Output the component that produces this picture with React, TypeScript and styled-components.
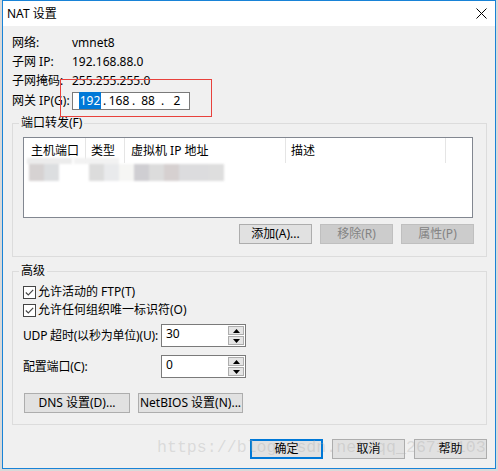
import React from 'react'
import styled, { createGlobalStyle } from 'styled-components'

const GlobalStyle = createGlobalStyle`
  html, body {
    margin: 0;
    padding: 0;
    background: #d9d9d9;
  }
  body {
    font-family: "Noto Sans", "Noto Sans CJK SC", sans-serif;
    font-size: 12px;
    color: #000;
  }
  * { box-sizing: border-box; }
`

const Window = styled.div`
  position: relative;
  width: 494px;
  height: 469px;
  margin-left: 2px;
  border: 1px solid #1883d7;
  background: #f0f0f0;
  display: flex;
  flex-direction: column;
  overflow: hidden;
`

const TitleBar = styled.div`
  height: 25px;
  background: #fff;
  display: flex;
  align-items: center;
  justify-content: space-between;
  padding-left: 4px;
  padding-right: 8px;
  font-size: 12px;
  line-height: 16px;
`

const Body = styled.div`
  flex: 1;
  display: flex;
  flex-direction: column;
  padding: 7px 7px 0 9px;
`

const Info = styled.div`
  position: relative;
  display: flex;
  flex-direction: column;
`

const InfoRow = styled.div<{ $h?: number }>`
  display: flex;
  align-items: center;
  height: ${p => p.$h ?? 19}px;
  line-height: 16px;
`

const InfoLabel = styled.div`
  width: 60px;
  white-space: nowrap;
`

const IpBox = styled.div`
  width: 118px;
  height: 18px;
  border: 1px solid #7a7a7a;
  background: #fff;
  display: flex;
  align-items: center;
  padding-left: 5px;
`

const Octet = styled.div`
  width: 24px;
  text-align: center;
  line-height: 14px;
`

const Selected = styled.span`
  background: #0078d7;
  color: #fff;
  padding: 0 1px;
`

const Dot = styled.div`
  width: 5px;
  text-align: center;
`

const RedMark = styled.div`
  position: absolute;
  left: 48px;
  top: 46px;
  width: 152px;
  height: 38px;
  border: 1px solid #e8413c;
  pointer-events: none;
`

const Group = styled.fieldset<{ $mt: number }>`
  margin: ${p => p.$mt}px 0 0 0;
  padding: 0;
  min-width: 0;
  width: 475px;
  border: 1px solid #dcdcdc;
`

const Legend = styled.legend`
  margin-left: 6px;
  padding: 0 2px;
  line-height: 16px;
`

const GroupInner = styled.div<{ $pt: number; $pb: number }>`
  padding: ${p => p.$pt}px 12px ${p => p.$pb}px 10px;
  display: flex;
  flex-direction: column;
`

const List = styled.div`
  width: 450px;
  height: 81px;
  border: 1px solid #828790;
  background: #fff;
  display: flex;
  flex-direction: column;
`

const Header = styled.div`
  display: flex;
  height: 25px;
`

const HeadCell = styled.div<{ $w: number; $pl?: number }>`
  width: ${p => p.$w}px;
  padding-left: ${p => p.$pl ?? 6}px;
  border-right: 1px solid #e5e5e5;
  display: flex;
  align-items: center;
  line-height: 16px;
  white-space: nowrap;
`

const BlurRow = styled.div`
  position: relative;
  height: 24px;
  margin-top: -5px;
  filter: blur(1.2px);
`

const Blob = styled.div<{ $x: number; $y: number; $w: number; $h: number; $c: string }>`
  position: absolute;
  left: ${p => p.$x}px;
  top: ${p => p.$y}px;
  width: ${p => p.$w}px;
  height: ${p => p.$h}px;
  background: ${p => p.$c};
`

const ButtonRow = styled.div<{ $mt: number; $justify?: string }>`
  display: flex;
  justify-content: ${p => p.$justify ?? 'flex-end'};
  gap: 8px;
  margin-top: ${p => p.$mt}px;
`

const Button = styled.div<{ $w: number; $disabled?: boolean; $default?: boolean }>`
  width: ${p => p.$w}px;
  height: 20px;
  display: flex;
  align-items: center;
  justify-content: center;
  line-height: 16px;
  white-space: nowrap;
  background: ${p => (p.$disabled ? '#cccccc' : '#e1e1e1')};
  border: ${p => (p.$default ? '2px solid #0078d7' : p.$disabled ? '1px solid #bfbfbf' : '1px solid #adadad')};
  color: ${p => (p.$disabled ? '#838383' : '#000')};
`

const CheckRow = styled.div`
  display: flex;
  align-items: center;
  height: 18px;
  line-height: 16px;
  gap: 2px;
`

const Box = styled.div`
  width: 13px;
  height: 13px;
  border: 1px solid #444;
  background: #fff;
  display: flex;
  align-items: center;
  justify-content: center;
`

const FieldRow = styled.div<{ $mt: number }>`
  display: flex;
  align-items: center;
  margin-top: ${p => p.$mt}px;
  line-height: 16px;
`

const FieldLabel = styled.div`
  width: 138px;
  white-space: nowrap;
  letter-spacing: -0.2px;
`

const Spin = styled.div`
  width: 85px;
  height: 23px;
  border: 1px solid #7a7a7a;
  background: #fff;
  display: flex;
`

const SpinText = styled.div`
  flex: 1;
  padding-left: 4px;
  line-height: 18px;
`

const SpinButtons = styled.div`
  width: 17px;
  display: flex;
  flex-direction: column;
  padding: 1px 1px 1px 0;
  gap: 1px;
`

const SpinBtn = styled.div`
  flex: 1;
  border: 1px solid #adadad;
  background: #e5e5e5;
  display: flex;
  align-items: center;
  justify-content: center;
`

const Footer = styled.div`
  display: flex;
  justify-content: flex-end;
  gap: 9px;
  margin-top: 14px;
  padding-right: 1px;
`

const Watermark = styled.div`
  position: absolute;
  left: 154px;
  top: 437px;
  font-family: "Liberation Mono", monospace;
  font-size: 16.6px;
  line-height: 20px;
  color: rgba(170, 170, 170, 0.32);
  white-space: nowrap;
  pointer-events: none;
`

const Check = () => (
  <Box>
    <svg width="9" height="9" viewBox="0 0 9 9">
      <polyline points="0.8,4.5 3.3,7 8.2,1.8" fill="none" stroke="#444" strokeWidth="1.1" />
    </svg>
  </Box>
)

const Arrow = ({ up }: { up?: boolean }) => (
  <svg width="7" height="4" viewBox="0 0 7 4">
    <polygon points={up ? '0,4 7,4 3.5,0' : '0,0 7,0 3.5,4'} fill="#000" />
  </svg>
)

const SpinBox = ({ value }: { value: string }) => (
  <Spin>
    <SpinText>{value}</SpinText>
    <SpinButtons>
      <SpinBtn><Arrow up /></SpinBtn>
      <SpinBtn><Arrow /></SpinBtn>
    </SpinButtons>
  </Spin>
)

const blobs = [
  { x: 3, y: 0, w: 45, h: 6, c: '#ececec' },
  { x: 50, y: 0, w: 45, h: 6, c: '#f2f2f2' },
  { x: 5, y: 6, w: 15, h: 17, c: '#d6d2d2' },
  { x: 20, y: 6, w: 15, h: 17, c: '#dcdee0' },
  { x: 65, y: 6, w: 15, h: 17, c: '#dcdcdc' },
  { x: 80, y: 6, w: 15, h: 17, c: '#e9eaec' },
  { x: 95, y: 6, w: 15, h: 17, c: '#f6f6f4' },
  { x: 110, y: 6, w: 15, h: 17, c: '#cfced2' },
  { x: 125, y: 6, w: 15, h: 17, c: '#dcdcdc' },
  { x: 140, y: 6, w: 15, h: 17, c: '#d6d0d0' },
  { x: 155, y: 6, w: 30, h: 17, c: '#dcdcde' },
  { x: 185, y: 6, w: 15, h: 17, c: '#dedede' },
]

export default function App() {
  return (
    <>
      <GlobalStyle />
      <Window>
        <TitleBar>
          <span>NAT 设置</span>
          <svg width="11" height="11" viewBox="0 0 11 11">
            <path d="M0.5 0.5 L10.5 10.5 M10.5 0.5 L0.5 10.5" stroke="#000" strokeWidth="1" />
          </svg>
        </TitleBar>
        <Body>
          <Info>
            <InfoRow><InfoLabel>网络:</InfoLabel>vmnet8</InfoRow>
            <InfoRow><InfoLabel>子网 IP:</InfoLabel>192.168.88.0</InfoRow>
            <InfoRow><InfoLabel>子网掩码:</InfoLabel>255.255.255.0</InfoRow>
            <InfoRow $h={22}>
              <InfoLabel>网关 IP(G):</InfoLabel>
              <IpBox>
                <Octet><Selected>192</Selected></Octet>
                <Dot>.</Dot>
                <Octet>168</Octet>
                <Dot>.</Dot>
                <Octet>88</Octet>
                <Dot>.</Dot>
                <Octet>2</Octet>
              </IpBox>
            </InfoRow>
            <RedMark />
          </Info>

          <Group $mt={3}>
            <Legend>端口转发(F)</Legend>
            <GroupInner $pt={6} $pb={12}>
              <List>
                <Header>
                  <HeadCell $w={62} $pl={7}>主机端口</HeadCell>
                  <HeadCell $w={39} $pl={5}>类型</HeadCell>
                  <HeadCell $w={161}>虚拟机 IP 地址</HeadCell>
                  <HeadCell $w={160} $pl={5}>描述</HeadCell>
                </Header>
                <BlurRow>
                  {blobs.map((b, i) => (
                    <Blob key={i} $x={b.x} $y={b.y} $w={b.w} $h={b.h} $c={b.c} />
                  ))}
                </BlurRow>
              </List>
              <ButtonRow $mt={6}>
                <Button $w={73}>添加(A)...</Button>
                <Button $w={73} $disabled>移除(R)</Button>
                <Button $w={73} $disabled>属性(P)</Button>
              </ButtonRow>
            </GroupInner>
          </Group>

          <Group $mt={6}>
            <Legend>高级</Legend>
            <GroupInner $pt={4} $pb={11}>
              <CheckRow><Check />允许活动的 FTP(T)</CheckRow>
              <CheckRow><Check />允许任何组织唯一标识符(O)</CheckRow>
              <FieldRow $mt={5}>
                <FieldLabel>UDP 超时(以秒为单位)(U):</FieldLabel>
                <SpinBox value="30" />
              </FieldRow>
              <FieldRow $mt={8}>
                <FieldLabel>配置端口(C):</FieldLabel>
                <SpinBox value="0" />
              </FieldRow>
              <ButtonRow $mt={15} $justify="flex-start">
                <Button $w={106} style={{ marginLeft: 1 }}>DNS 设置(D)...</Button>
                <Button $w={105}>NetBIOS 设置(N)...</Button>
              </ButtonRow>
            </GroupInner>
          </Group>

          <Footer>
            <Button $w={73} $default>确定</Button>
            <Button $w={73}>取消</Button>
            <Button $w={73}>帮助</Button>
          </Footer>
        </Body>
        <Watermark>https://blog.csdn.net/qq_26711103</Watermark>
      </Window>
    </>
  )
}
